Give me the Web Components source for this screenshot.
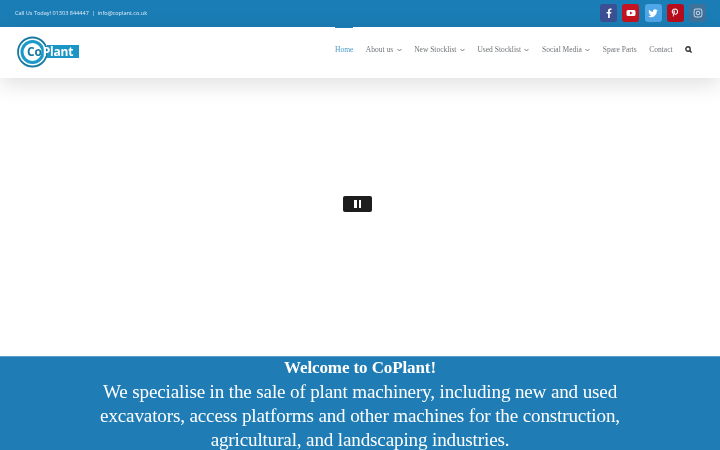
<!DOCTYPE html>
<html lang="en"><head><meta charset="utf-8"><title>CoPlant</title>
<style>
html,body{margin:0;height:450px;overflow:hidden;background:#fff}
body{display:flex;flex-direction:column;font-family:"Liberation Serif",serif}
</style></head><body>
<top-bar></top-bar>
<site-header></site-header>
<video-area></video-area>
<welcome-band>
<strong slot="title">Welcome to CoPlant!</strong>
We specialise in the sale of plant machinery, including new and used excavators, access platforms and other machines for the construction, agricultural, and landscaping industries.
</welcome-band>
<script>
function def(name,html,init){
  customElements.define(name,class extends HTMLElement{
    constructor(){super();this.attachShadow({mode:'open'}).innerHTML=html(this)}
  });
}
def('social-btn',h=>`<style>
:host{width:17px;height:18px;border-radius:3px;background:var(--bg);display:flex;align-items:center;justify-content:center}
</style><slot></slot>`);
def('top-bar',()=>`<style>
:host{display:flex;flex:none;height:27px;background:#1b7db6;align-items:center;justify-content:space-between;padding:0 15px;box-sizing:border-box;font:5.55px "Open Sans",sans-serif;color:#e3eff6}
span{display:block;will-change:transform;padding-bottom:1px}
.s{display:flex;gap:5.25px;margin-right:-1px;padding-bottom:1px}
svg{display:block;width:10px;height:10px;fill:#fff}
</style>
<span>Call Us Today! 01303 844447 &nbsp;|&nbsp; info@coplant.co.uk</span>
<div class="s">
<social-btn style="--bg:#3b4f92"><svg viewBox="0 0 10 10"><path d="M5.800 10V5.600h1.400l.2-1.700H5.800V2.900c0-.5.2-.8.8-.8h.9V.6C7.300.6 6.900.5 6.300.5 5 .5 4.100 1.300 4.100 2.700v1.200H2.600v1.700h1.500V10z"/></svg></social-btn>
<social-btn style="--bg:#c4141f"><svg viewBox="0 0 10 10"><path fill-rule="evenodd" d="M2 2h6a1.500 1.500 0 0 1 1.500 1.500v3A1.500 1.500 0 0 1 8 8H2A1.500 1.500 0 0 1 .5 6.500v-3A1.500 1.500 0 0 1 2 2zm2 1.500v3L6.700 5z"/></svg></social-btn>
<social-btn style="--bg:#4fa6e8"><svg viewBox="0 0 10 10"><path d="M9.800 2.200c-.4.200-.7.300-1.100.3.400-.2.700-.6.900-1-.4.200-.8.400-1.200.5a1.900 1.900 0 0 0-3.300 1.800C3.500 3.700 2 2.900 1 1.700c-.5.900-.2 2 .6 2.600-.3 0-.6-.1-.9-.2 0 .9.700 1.700 1.600 1.900-.3.100-.6.100-.9 0 .3.800 1 1.300 1.800 1.300A4 4 0 0 1 .2 8.200 5.500 5.500 0 0 0 8.800 3.300c.4-.3.700-.7 1-1.100z"/></svg></social-btn>
<social-btn style="--bg:#b80c1c"><svg viewBox="0 0 10 10"><path d="M5.200.4C2.900.4 1.700 1.900 1.700 3.600c0 .8.400 1.800 1.100 2.100.2.100.3 0 .3-.1l.2-.6c0-.1 0-.2-.1-.3-.2-.3-.4-.7-.4-1.100 0-1.100.8-2.100 2.200-2.100 1.200 0 2 .8 2 2 0 1.300-.7 2.300-1.600 2.300-.5 0-.9-.4-.8-.9.200-.6.400-1.200.4-1.600 0-.4-.2-.7-.6-.7-.5 0-.9.500-.9 1.200 0 .4.100.7.100.7l-.7 2.700c-.1.600 0 1.500 0 1.800.2-.1.700-1 .9-1.600l.4-1.300c.2.300.7.600 1.200.6 1.600 0 2.700-1.400 2.700-3.200C8 1.600 6.700.4 5.200.4z"/></svg></social-btn>
<social-btn style="--bg:#3f729b"><svg viewBox="0 0 10 10" style="opacity:.7"><path fill-rule="evenodd" d="M3 .6h4A2.400 2.400 0 0 1 9.400 3v4A2.400 2.400 0 0 1 7 9.400H3A2.400 2.400 0 0 1 .6 7V3A2.400 2.400 0 0 1 3 .6zm0 1A1.400 1.400 0 0 0 1.600 3v4A1.400 1.400 0 0 0 3 8.400h4A1.400 1.400 0 0 0 8.400 7V3A1.400 1.400 0 0 0 7 1.600zM5 2.800a2.200 2.200 0 1 1 0 4.400 2.200 2.200 0 0 1 0-4.400zm0 1a1.200 1.200 0 1 0 0 2.400 1.200 1.200 0 0 0 0-2.400z"/></svg></social-btn>
</div>`);
def('nav-item',h=>`<style>
:host{display:flex;align-items:center;gap:3.500px;height:100%;box-sizing:border-box;font:7.500px "Liberation Serif",serif;color:#6f7377;border-top:1px solid transparent;padding-bottom:1px;white-space:nowrap}
:host([active]){color:#4b97c6;border-top-color:#1b7db6}
svg{width:5px;height:4px;fill:none;stroke:#6f7377;stroke-width:.9}
</style><slot></slot>${h.hasAttribute('sub')?'<svg viewBox="0 0 5 4"><path d="M.5.9 2.500 3 4.500.9"/></svg>':''}`);
def('site-logo',()=>`<style>
:host{display:block;width:62px;height:32px;position:relative;flex:none;font:700 12px "Open Sans",sans-serif}
svg{position:absolute;left:0;top:0;width:32px;height:32px}
.t{position:absolute;left:10px;top:9.500px;height:13px;width:52px;line-height:13px;color:#fff;letter-spacing:-.2px;white-space:nowrap;z-index:0}
.t::before{content:"";position:absolute;left:20px;right:0;top:0;bottom:0;background:#1b95c5;z-index:-1}
.t b{color:#13779f;font-weight:700;margin-right:1px}
</style>
<svg viewBox="0 0 32 32"><circle cx="15.500" cy="16" r="14.500" fill="none" stroke="#1b7a9f" stroke-width="1.800"/><circle cx="15.500" cy="16" r="10.500" fill="none" stroke="#1b9ac9" stroke-width="3"/></svg>
<div class="t"><b>Co</b>Plant</div>`);
def('site-header',()=>`<style>
:host{display:flex;flex:none;height:51px;background:#fff;align-items:stretch;justify-content:space-between;padding:0 28px 0 17px;box-sizing:border-box;box-shadow:0 6px 22px rgba(0,0,0,.13);position:relative}
.l{display:flex;align-items:center;padding-bottom:2px}
nav{display:flex;gap:12.500px;align-items:stretch;padding-bottom:6px;height:45px;will-change:transform}
svg{width:7px;height:7px;fill:none;stroke:#333;stroke-width:1.400;align-self:center}
</style>
<div class="l"><site-logo></site-logo></div>
<nav>
<nav-item active>Home</nav-item>
<nav-item sub>About us</nav-item>
<nav-item sub>New Stocklist</nav-item>
<nav-item sub>Used Stocklist</nav-item>
<nav-item sub>Social Media</nav-item>
<nav-item>Spare Parts</nav-item>
<nav-item>Contact</nav-item>
<svg viewBox="0 0 7 7"><circle cx="3" cy="3" r="2.200"/><path d="M4.600 4.600 6.600 6.600"/></svg>
</nav>`);
def('video-area',()=>`<style>
:host{display:flex;flex:1;align-items:center;justify-content:center;background:#fff;padding:0 5px 27px 0}
.b{width:29px;height:16px;background:#1d1d1d;border-radius:2px;display:flex;gap:2px;align-items:center;justify-content:center}
i{display:block;width:2.500px;height:8px;background:#fff}
</style><div class="b"><i></i><i></i></div>`);
def('welcome-band',()=>`<style>
:host{display:block;flex:none;height:94px;box-sizing:border-box;background:#1f7cb4;border-top:1px solid #5a9fc9;color:#fff;text-align:center;font:19.100px/24px "Liberation Serif",serif;letter-spacing:-.15px;padding:0 90px;overflow:hidden}
div{will-change:transform;margin-top:-1px}
::slotted(strong){display:block;font-size:17px;letter-spacing:-.1px}
</style><div><slot name="title"></slot><slot></slot></div>`);
</script>
</body></html>
